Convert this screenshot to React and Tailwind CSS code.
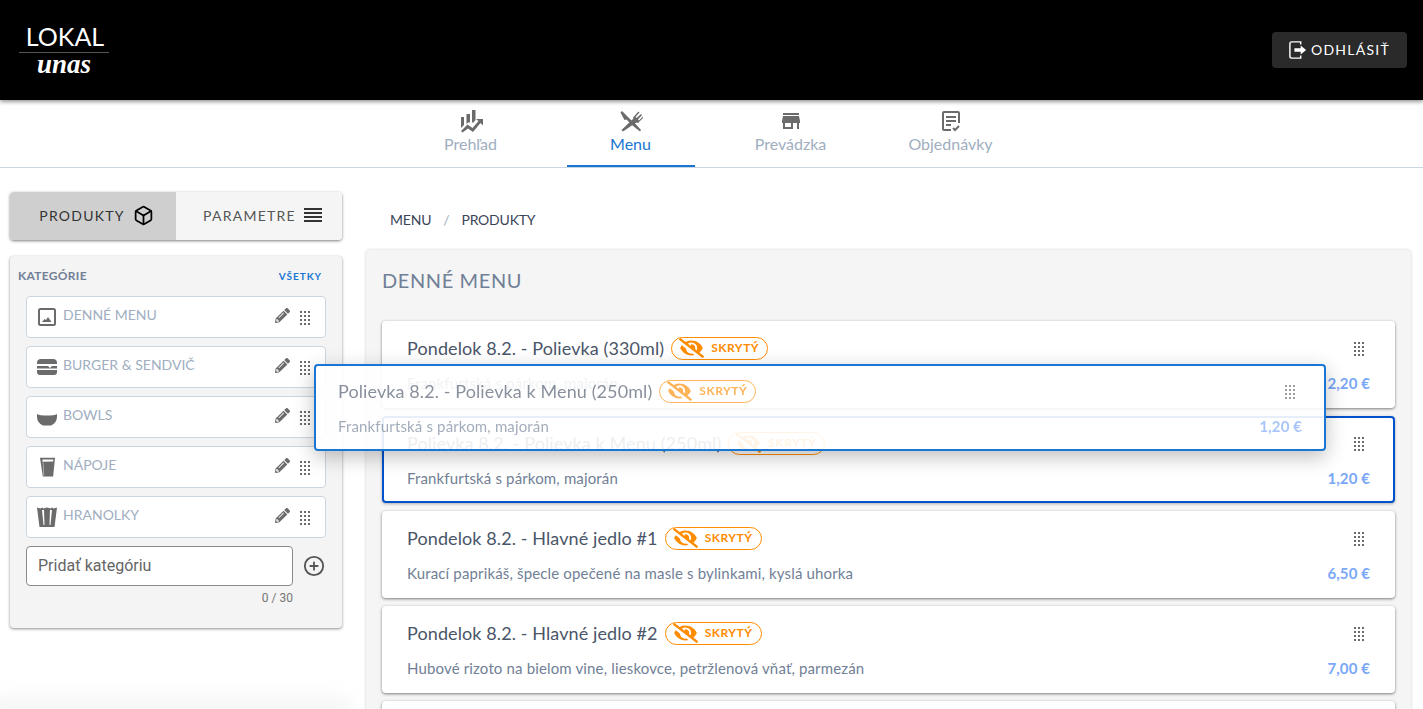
import { FaEyeSlash, FaPencilAlt } from "react-icons/fa";
import { FiBox, FiPlusCircle } from "react-icons/fi";
import { MdStore } from "react-icons/md";

const TABS = [
  { label: "Prehľad", icon: <ChartIcon /> },
  { label: "Menu", icon: <CutleryIcon />, active: true },
  { label: "Prevádzka", icon: <MdStore className="w-[24px] h-[24px]" /> },
  { label: "Objednávky", icon: <OrdersIcon /> },
];

const CATEGORIES = [
  { label: "DENNÉ MENU", icon: <ImageIcon /> },
  { label: "BURGER & SENDVIČ", icon: <BurgerIcon /> },
  { label: "BOWLS", icon: <BowlIcon /> },
  { label: "NÁPOJE", icon: <GlassIcon /> },
  { label: "HRANOLKY", icon: <FriesIcon /> },
];

const ITEMS = [
  { title: "Pondelok 8.2. - Polievka (330ml)", desc: "Frankfurtská s párkom, majorán", price: "2,20 €" },
  { title: "Polievka 8.2. - Polievka k Menu (250ml)", desc: "Frankfurtská s párkom, majorán", price: "1,20 €", selected: true },
  { title: "Pondelok 8.2. - Hlavné jedlo #1", desc: "Kurací paprikáš, špecle opečené na masle s bylinkami, kyslá uhorka", price: "6,50 €" },
  { title: "Pondelok 8.2. - Hlavné jedlo #2", desc: "Hubové rizoto na bielom vine, lieskovce, petržlenová vňať, parmezán", price: "7,00 €" },
];

export default function App() {
  return (
    <div className="relative h-[709px] overflow-hidden bg-white font-['Lato',sans-serif]">
      {/* Top bar */}
      <header className="relative z-10 h-[100px] bg-black flex items-center justify-between pl-[19px] pr-[16px] shadow-[0_2px_4px_rgba(0,0,0,0.4)]">
        <div className="w-[90px] -mt-[2px] flex flex-col items-center text-white">
          <span className="pb-[2px] pl-[2px] text-[25px] leading-[27px]">LOKAL</span>
          <span className="w-full h-px bg-[#555]" />
          <span className="text-[27px] leading-[22px] font-bold italic font-['Liberation_Serif',serif]">unas</span>
        </div>
        <button className="w-[135px] h-[36px] pb-[1px] rounded bg-[#2a2a2a] flex items-center justify-center gap-[4px] text-white text-[14px] tracking-[1.25px]">
          <LogoutIcon />
          ODHLÁSIŤ
        </button>
      </header>

      {/* Main tabs */}
      <nav className="h-[68px] pr-[2px] flex justify-center border-b border-[#cbd5e0]">
        {TABS.map((tab) => (
          <div key={tab.label} className="w-[160px] flex justify-center">
            <div className={`w-[128px] flex flex-col items-center pt-[9px] ${tab.active ? "border-b-2 border-[#1976d2] text-[#1976d2]" : "text-[#a0aec0]"}`}>
              <span className="h-[23px] text-[#6b6b6b]">{tab.icon}</span>
              <span className="text-[16px] leading-[24px]">{tab.label}</span>
            </div>
          </div>
        ))}
      </nav>

      <div className="flex pl-[10px] pr-[12px] gap-[24px]">
        {/* Sidebar */}
        <aside className="w-[332px] shrink-0 pt-[24px]">
          <div className="flex h-[48px] rounded overflow-hidden shadow-[0_1px_3px_rgba(0,0,0,0.5)] text-[14px] tracking-[1.25px]">
            <div className="flex-1 bg-[#cfcfcf] text-[#333] flex items-center justify-center gap-[8px] pl-[7px] pb-[2px]">
              PRODUKTY <FiBox className="w-[21px] h-[21px] text-black" />
            </div>
            <div className="flex-1 bg-[#f5f5f5] text-[#555] flex items-center justify-center gap-[8px] pl-[7px] pb-[2px]">
              PARAMETRE <MenuLines />
            </div>
          </div>

          <section className="mt-[16px] h-[372px] rounded bg-[#f4f4f4] px-[16px] pt-[11px] shadow-[0_1px_3px_rgba(0,0,0,0.45)]">
            <div className="flex items-center justify-between -ml-[8px] pr-[4px] h-[18px] mb-[11px]">
              <span className="text-[12px] font-bold tracking-[0.3px] text-[#718096]">KATEGÓRIE</span>
              <span className="text-[10px] font-bold tracking-[1px] text-[#1976d2]">VŠETKY</span>
            </div>
            <div className="flex flex-col gap-[8px]">
              {CATEGORIES.map((cat) => (
                <div key={cat.label} className="h-[42px] rounded bg-white border border-[#cbd5e0] flex items-center pl-[10px] pr-[14px]">
                  <span className="w-[20px] flex justify-center text-[#6b6b6b]">{cat.icon}</span>
                  <span className="ml-[6px] -mt-[6px] text-[14px] text-[#a0aec0]">{cat.label}</span>
                  <FaPencilAlt className="ml-auto -mt-[3px] w-[15px] h-[15px] text-[#6b6b6b]" />
                  <Dots className="ml-[9px] text-[#6b6b6b]" />
                </div>
              ))}
            </div>
            <div className="flex items-center mt-[8px]">
              <div className="w-[267px] h-[40px] rounded border border-[#8a8a8a] bg-white flex items-center px-[11px] text-[16px] text-[#666] font-['Roboto',sans-serif]">
                Pridať kategóriu
              </div>
              <FiPlusCircle className="ml-[10px] w-[22px] h-[22px] text-[#555]" />
            </div>
            <div className="w-[267px] mt-[3px] text-right text-[12px] text-[#757575] font-['Roboto',sans-serif]">0 / 30</div>
          </section>
        </aside>

        {/* Content */}
        <main className="flex-1 min-w-0">
          <div className="h-[82px] pl-[24px] pt-[43px] flex gap-[12px] text-[14px] leading-[18px] tracking-[-0.2px] text-[#3b4557]">
            <span>MENU</span>
            <span className="text-[#a0aec0]">/</span>
            <span>PRODUKTY</span>
          </div>
          <section className="bg-[#f5f5f5] rounded-t px-[16px] pt-[17px] pb-[24px] shadow-[0_0_3px_rgba(0,0,0,0.2)]">
            <h1 className="text-[20px] leading-[26px] tracking-[0.6px] text-[#718096] mb-[28px]">DENNÉ MENU</h1>
            <div className="flex flex-col gap-[8px]">
              {ITEMS.map((item) => <ItemCard key={item.title} {...item} />)}
              <div className="h-[87px] rounded bg-white shadow-[0_1px_3px_rgba(0,0,0,0.5)]" />
            </div>
          </section>
        </main>
      </div>

      {/* Item being dragged */}
      <div className="absolute left-[314px] top-[364px] w-[1012px] z-20">
        <ItemCard {...ITEMS[1]} dragging />
      </div>

      {/* Soft fade at the bottom left */}
      <div className="absolute -left-[10px] -bottom-[6px] w-[360px] h-[24px] blur-sm bg-gradient-to-t from-[#efefef] to-transparent" />
    </div>
  );
}

function ItemCard({ title, desc, price, selected, dragging }) {
  const frame = dragging
    ? "border-[2px] border-[#1976d2] rounded-sm bg-white/90 shadow-[0_6px_20px_rgba(0,0,0,0.25)] pl-[22px] pr-[22px]"
    : selected
      ? "border-[2px] border-[#0052cc] rounded bg-white shadow-[0_1px_3px_rgba(0,0,0,0.3)] px-[23px]"
      : "rounded bg-white shadow-[0_1px_3px_rgba(0,0,0,0.5)] px-[25px]";
  return (
    <div className={`h-[87px] flex flex-col justify-center ${frame}`}>
      <div className={dragging ? "opacity-65" : ""}>
        <div className="flex items-center h-[28px]">
          <span className="text-[18px] tracking-[0.1px] text-[#4a5568] leading-[24px]">{title}</span>
          <Badge />
          <Dots className={`ml-auto text-[#6b6b6b] ${dragging ? "mr-[6px]" : "mr-[5px]"}`} />
        </div>
        <div className="flex items-center justify-between mt-[9px] h-[24px]">
          <span className="text-[15px] tracking-[0.15px] text-[#718096]">{desc}</span>
          <span className="text-[15px] font-bold tracking-[0.1px] text-[#7aa7f7]">{price}</span>
        </div>
      </div>
    </div>
  );
}

function Badge() {
  return (
    <span className="ml-[7px] w-[97px] h-[23px] rounded-full border border-[#ff8c00] flex items-center pl-[7px] text-[#ff8c00]">
      <FaEyeSlash className="w-[25px] h-[20px]" />
      <span className="ml-[7px] text-[12px] font-bold tracking-[0.5px]">SKRYTÝ</span>
    </span>
  );
}

function Dots({ className }) {
  const rows = [0, 1, 2, 3];
  const cols = [1, 5, 9];
  return (
    <svg viewBox="0 0 12 15" className={`w-[12px] h-[15px] fill-current ${className}`}>
      {rows.map((r) => cols.map((x) => (
        <rect key={`${r}-${x}`} x={x} y={r * 4 + 1} width="2" height="2" />
      )))}
    </svg>
  );
}

function ChartIcon() {
  return (
    <svg viewBox="0 0 24 24" className="w-[24px] h-[24px]" fill="currentColor">
      <path d="M2 8h3v8l-3 3zM7.500 5H11v9l-1-1-2.500 2zM13 1h3.500v10L14 14l-1-1z" />
      <path d="M2 22l6.500-6.500 5 3.500 6-7-2.500-2H24v6.500L21.500 14l-7.500 9-5-3.500L3.500 23.500z" />
    </svg>
  );
}

function CutleryIcon() {
  return (
    <svg viewBox="0 0 24 24" className="w-[24px] h-[24px]" fill="currentColor">
      <path d="M1.500 3.500 3 2l10.500 10.500-2 2-4-4-2 .5z" />
      <path d="M11 14.500 21 22.500l1-1.500-8.500-9.500z" />
      <path d="M2.500 21 14.500 9.500l-.5-1L19.500 2.500l1 1-4 4.500 1 1 4.500-4 1 1-4 4.500 1 1 4-4 .5 1-5.500 5.500-1.500-.5-1 .5L4 22.500z" />
    </svg>
  );
}

function OrdersIcon() {
  return (
    <svg viewBox="0 0 24 24" className="w-[24px] h-[24px]" fill="none" stroke="currentColor" strokeWidth="2">
      <path d="M12 21H5a1 1 0 0 1-1-1V4a1 1 0 0 1 1-1h14a1 1 0 0 1 1 1v10" />
      <path d="M7 8h10M7 12h10M7 16h5M14 19l2 2 4-4" />
    </svg>
  );
}

function LogoutIcon() {
  return (
    <svg viewBox="0 0 20 22" className="w-[18px] h-[20px]" fill="none" stroke="currentColor" strokeWidth="1.6">
      <path d="M13 5V2H3a2 2 0 0 0-2 2v14a2 2 0 0 0 2 2h10v-3" />
      <path d="M6 9h7V6l6 5-6 5v-3H6z" fill="currentColor" stroke="none" />
    </svg>
  );
}

function MenuLines() {
  return (
    <svg viewBox="0 0 18 14" className="w-[18px] h-[14px] fill-[#333]">
      <rect y="0" width="18" height="2" />
      <rect y="4" width="18" height="2" />
      <rect y="8" width="18" height="2" />
      <rect y="12" width="18" height="2" />
    </svg>
  );
}

function ImageIcon() {
  return (
    <svg viewBox="0 0 18 18" className="w-[18px] h-[18px]" fill="none" stroke="currentColor" strokeWidth="2">
      <rect x="1" y="1" width="16" height="16" rx="1.500" />
      <path d="M4 14l2.500-3 1.500 1 2-3 3.500 5z" fill="currentColor" stroke="none" />
    </svg>
  );
}

function BurgerIcon() {
  return (
    <svg viewBox="0 0 20 16" className="w-[20px] h-[16px] fill-current">
      <path d="M0 5V4a4 4 0 0 1 4-4h12a4 4 0 0 1 4 4v1z" />
      <path d="M0 7h11l2 2 2-2h5v2.500H0z" />
      <path d="M0 11h20v2a3 3 0 0 1-3 3H3a3 3 0 0 1-3-3z" />
    </svg>
  );
}

function BowlIcon() {
  return (
    <svg viewBox="0 0 20 12" className="w-[20px] h-[12px] mt-[6px] fill-current">
      <path d="M0 0 C3 2 17 2 20 0 V2 A10 10 0 0 1 14 11.500 H6 A10 10 0 0 1 0 2z" />
    </svg>
  );
}

function GlassIcon() {
  return (
    <svg viewBox="0 0 16 20" className="w-[15px] h-[20px] fill-current">
      <path d="M0 0h16l-2 20H3zM2.500 2l.3 2.500L14 4l.2-2z" fillRule="evenodd" />
      <path d="M2.800 5l1 14h.8L3.500 5z" fill="#ffffff" opacity="0.6" />
    </svg>
  );
}

function FriesIcon() {
  return (
    <svg viewBox="0 0 20 20" className="w-[20px] h-[20px] fill-current">
      <path d="M0 0.500 3.500 1.500 5 0.500 6.500 1.500 10 0.500 13.500 1.500 15 0.500 16.500 1.500 20 0.500 17.500 20H2.500z" />
      <path d="M5 3 6.500 18h1L7 3zM15 3l-1.500 15h-1L13 3z" fill="#ffffff" />
    </svg>
  );
}
